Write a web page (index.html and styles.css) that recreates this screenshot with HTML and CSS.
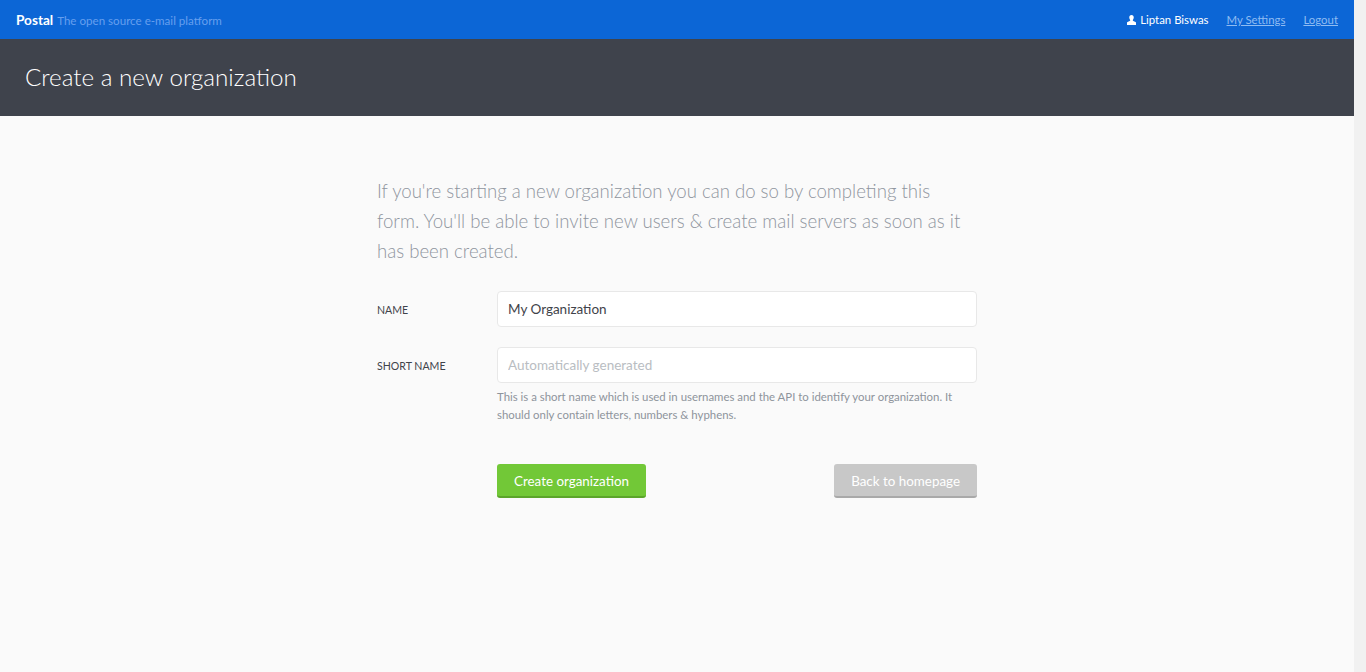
FILE: index.html
```html
<!DOCTYPE html>
<html lang="en">
<head>
  <meta charset="UTF-8">
  <title>Create a new organization</title>
  <link rel="stylesheet" href="styles.css">
</head>
<body>

  <div class="page">
    <header class="topbar">
      <div class="brand">
        <span class="brand-name">Postal</span>
        <span class="brand-tag">The open source e-mail platform</span>
      </div>
      <nav class="usernav">
        <span class="username">
          <svg class="user-icon" width="9" height="10" viewBox="0 0 10 11"><path d="M5 0C3.4 0 2.5 1.2 2.5 2.8c0 1.1.4 2 1 2.6v1L.6 7.7C.2 7.900 0 8.200 0 8.600V11h10V8.600c0-.4-.2-.7-.6-.9L6.500 6.400v-1c.6-.6 1-1.500 1-2.600C7.500 1.200 6.600 0 5 0z" fill="#fff"/></svg>
          Liptan Biswas
        </span>
        <a href="#">My Settings</a>
        <a href="#">Logout</a>
      </nav>
    </header>

    <div class="titlebar">
      <h1>Create a new organization</h1>
    </div>

    <main class="content">
      <p class="intro">If you're starting a new organization you can do so by completing this form. You'll be able to invite new users &amp; create mail servers as soon as it has been created.</p>

      <form class="org-form">
        <div class="field">
          <label for="name">Name</label>
          <div class="field-input">
            <input type="text" id="name" value="My Organization">
          </div>
        </div>
        <div class="field">
          <label for="shortName">Short Name</label>
          <div class="field-input">
            <input type="text" id="shortName" placeholder="Automatically generated">
            <p class="help">This is a short name which is used in usernames and the API to identify your organization. It should only contain letters, numbers &amp; hyphens.</p>
          </div>
        </div>
        <div class="actions">
          <button type="submit" class="btn btn-green">Create organization</button>
          <a href="#" class="btn btn-grey">Back to homepage</a>
        </div>
      </form>
    </main>
  </div>
  <div class="scrollbar"></div>

</body>
</html>
```

FILE: styles.css
```css
* {
  box-sizing: border-box;
}
html, body {
  height: 100%;
}
body {
  margin: 0;
  display: flex;
  overflow: hidden;
  font-family: "Lato", "Noto Sans", sans-serif;
  background-color: #fafafa;
  color: #3f434a;
}
.page {
  flex: 1;
  min-width: 0;
}
.scrollbar {
  width: 12px;
  background-color: #f1f1f1;
}
.topbar {
  height: 39px;
  padding: 0 16px;
  display: flex;
  align-items: center;
  justify-content: space-between;
  background-color: #0c66d6;
  font-size: 11.4px;
}
.brand-name {
  color: #fff;
  font-weight: bold;
  font-size: 13.6px;
}
.brand-tag {
  margin-left: 1px;
  color: #669fee;
  font-size: 11.6px;
}
.usernav {
  display: flex;
  align-items: center;
  gap: 18px;
}
.usernav a {
  color: #8fbcf2;
}
.username {
  color: #fff;
  display: flex;
  align-items: center;
  gap: 4px;
}
.titlebar {
  height: 77px;
  padding: 0 25px 2px;
  display: flex;
  align-items: center;
  background-color: #3f434c;
}
.titlebar h1 {
  margin: 0;
  color: #fff;
  font-size: 24.2px;
  font-weight: 300;
}
.content {
  width: 600px;
  margin: 0 auto;
  padding-top: 60px;
}
.intro {
  margin: 0 0 25px;
  color: #8f959e;
  font-size: 18.6px;
  font-weight: 300;
  line-height: 30px;
}
.field {
  display: flex;
  margin-bottom: 20px;
}
.field label {
  width: 120px;
  padding-top: 13px;
  font-size: 10.6px;
  text-transform: uppercase;
  color: #3f434a;
}
.field-input {
  flex: 1;
}
.field input {
  display: block;
  width: 100%;
  height: 36px;
  padding: 0 10px;
  border: 1px solid #e8e8e8;
  border-radius: 4px;
  background-color: #fff;
  color: #3f434a;
  font-family: inherit;
  font-size: 13.5px;
}
.field input::placeholder {
  color: #b9bdc2;
}
.help {
  margin: 5px 0 0;
  color: #8e949c;
  font-size: 11.4px;
  line-height: 18px;
}
.actions {
  display: flex;
  justify-content: space-between;
  margin: 40px 0 0 120px;
}
.btn {
  height: 34px;
  padding: 1px 17px 0;
  display: flex;
  align-items: center;
  border: 0;
  border-radius: 3px;
  color: #fff;
  font-family: inherit;
  font-size: 13.4px;
  text-decoration: none;
}
.btn-green {
  background-color: #72c837;
  border-bottom: 2px solid #5ba52a;
}
.btn-grey {
  background-color: #c8c8c8;
  border-bottom: 2px solid #a9a9a9;
}
```
